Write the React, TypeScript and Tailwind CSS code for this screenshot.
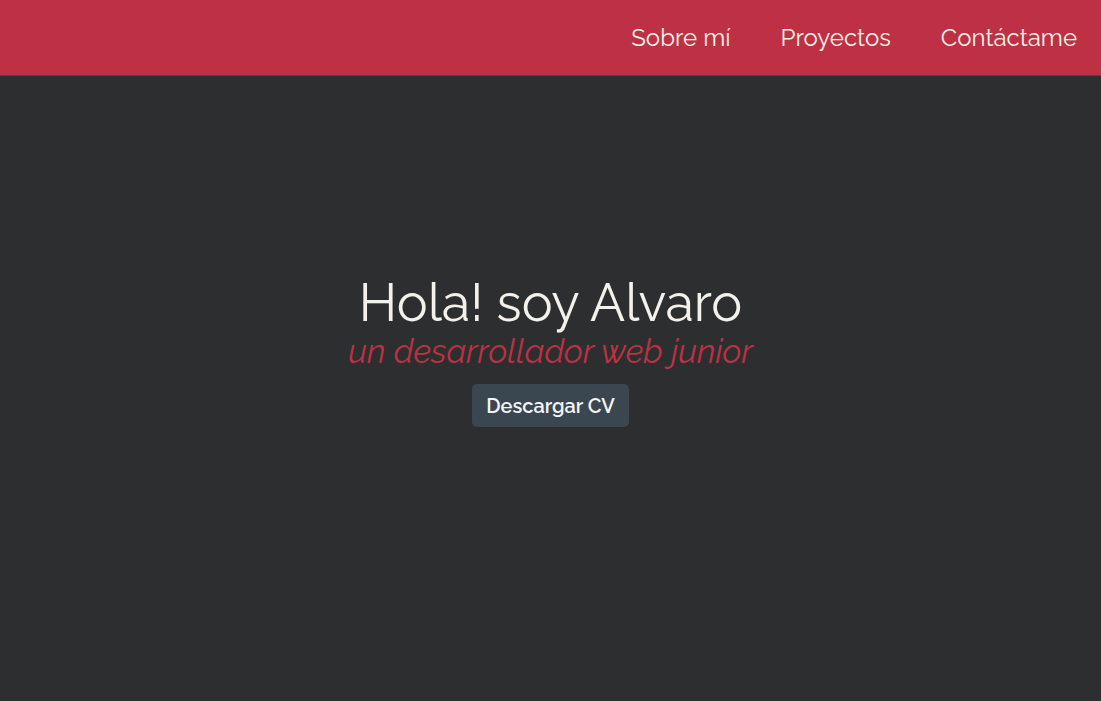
import React from "react";

export default function App() {
  const font = { fontFamily: "Raleway, Lato, 'Noto Sans', sans-serif" };
  return (
    <div className="min-h-[701px] w-full bg-[#2d2e30] flex flex-col" style={font}>
      <header className="h-[76px] bg-[#be3144] border-b border-[#4a4b4e] flex items-center justify-end pr-[24px]">
        <nav className="flex items-center gap-[50px] text-[24px] text-[#f4f1ea]">
          <a>Sobre mí</a>
          <a>Proyectos</a>
          <a>Contáctame</a>
        </nav>
      </header>
      <main className="flex flex-col items-center pt-[196px]">
        <h1 className="text-[52px] leading-[62px] text-[#f4f1ea]">Hola! soy Alvaro</h1>
        <p className="text-[33px] leading-[35px] italic text-[#be3144]">un desarrollador web junior</p>
        <button className="mt-[15px] h-[43px] px-[14px] rounded-[5px] bg-[#3a4750] text-[#f4f4f4] text-[20px] font-semibold">
          Descargar CV
        </button>
      </main>
    </div>
  );
}
